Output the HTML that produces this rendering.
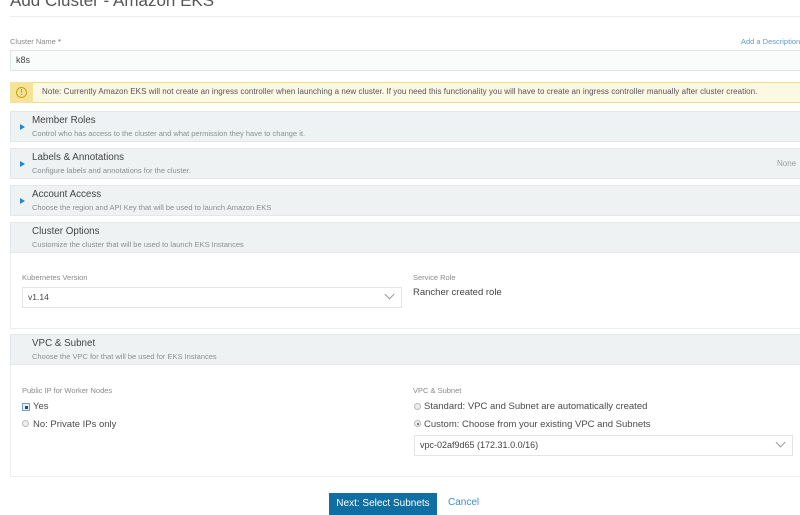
<!DOCTYPE html>
<html><head><meta charset="utf-8"><style>
*{box-sizing:border-box;margin:0;padding:0}
body{width:800px;height:513px;overflow:hidden;background:#fff;font-family:"Liberation Sans",sans-serif;color:#4a4a4a;position:relative}
.a{position:absolute;white-space:nowrap}
.lbl{font-size:7.5px;color:#8a8a8a}
.panel{position:absolute;left:10px;width:800px;background:#eff2f3;border:1px solid #e4e7e9}
.body{position:absolute;left:10px;width:800px;background:#fff;border:1px solid #eceeef}
.ph{position:absolute;left:21px;font-size:9.8px;color:#444}
.ps{position:absolute;left:21px;font-size:7.5px;color:#8d8d8d}
.tri{position:absolute;left:9px;width:0;height:0;border-left:5px solid #1e88d8;border-top:3.5px solid transparent;border-bottom:3.5px solid transparent}
.inp{position:absolute;background:#fff;border:1px solid #e2e5e7;font-size:9px;color:#444;padding-left:5px}
.rad{position:absolute;width:7px;height:7px;border-radius:50%;border:1px solid #b8b8b8;background:#eee}
</style></head><body>
<div class="a" style="left:10px;top:-9px;font-size:17px;color:#555">Add Cluster - Amazon EKS</div>
<div class="a" style="left:10px;top:16px;width:790px;height:1px;background:#ebedee"></div>
<div class="a lbl" style="left:10px;top:37px">Cluster Name <span style="color:#d33">*</span></div>
<div class="a" style="left:741px;top:37px;font-size:7.5px;color:#5b9bd5">Add a Description</div>
<div class="inp" style="left:10px;top:50px;width:800px;height:21px;background:#fafbfb;line-height:19px">k8s</div>
<div class="a" style="left:10px;top:82px;width:800px;height:21px;background:#fdf8e3;border:1px solid #f2dc78"></div>
<div class="a" style="left:10px;top:82px;width:23px;height:21px;background:#f6e39a"></div>
<div class="a" style="left:16px;top:87px;width:11px;height:11px;border:1.3px solid #c9a10b;border-radius:50%;font-size:8px;line-height:9px;text-align:center;color:#c9a10b;font-weight:bold">!</div>
<div class="a" style="left:42px;top:87px;font-size:8px;letter-spacing:0.05px;color:#555">Note: Currently Amazon EKS will not create an ingress controller when launching a new cluster. If you need this functionality you will have to create an ingress controller manually after cluster creation.</div>

<div class="panel" style="top:111px;height:31px"><div class="tri" style="top:12px"></div><div class="ph" style="top:3px">Member Roles</div><div class="ps" style="top:17px">Control who has access to the cluster and what permission they have to change it.</div></div>
<div class="panel" style="top:148px;height:31px"><div class="tri" style="top:12px"></div><div class="ph" style="top:3px">Labels &amp; Annotations</div><div class="ps" style="top:17px">Configure labels and annotations for the cluster.</div><div class="a" style="left:766px;top:10px;font-size:8px;color:#999">None</div></div>
<div class="panel" style="top:185px;height:31px"><div class="tri" style="top:12px"></div><div class="ph" style="top:3px">Account Access</div><div class="ps" style="top:17px">Choose the region and API Key that will be used to launch Amazon EKS</div></div>

<div class="body" style="top:222px;height:107px"></div>
<div class="panel" style="top:222px;height:31px"><div class="ph" style="top:3px">Cluster Options</div><div class="ps" style="top:17px">Customize the cluster that will be used to launch EKS Instances</div></div>
<div class="a lbl" style="left:22px;top:273px">Kubernetes Version</div>
<div class="inp" style="left:22px;top:287px;width:380px;height:21px;line-height:19px;font-size:8.5px">v1.14<span style="position:absolute;right:8px;top:3px;width:7px;height:7px;border-right:1px solid #999;border-bottom:1px solid #999;transform:rotate(45deg)"></span></div>
<div class="a lbl" style="left:413px;top:273px">Service Role</div>
<div class="a" style="left:413px;top:287px;font-size:9.5px;color:#444">Rancher created role</div>

<div class="body" style="top:334px;height:143px"></div>
<div class="panel" style="top:334px;height:31px"><div class="ph" style="top:3px">VPC &amp; Subnet</div><div class="ps" style="top:17px">Choose the VPC for that will be used for EKS Instances</div></div>
<div class="a lbl" style="left:22px;top:386px">Public IP for Worker Nodes</div>
<div class="a" style="left:22px;top:403px;width:8px;height:8px;border:1px solid #6a9ee0;background:#e8effa"><div style="margin:1.5px;width:3px;height:3px;background:#444"></div></div>
<div class="a" style="left:33px;top:401px;font-size:9.5px">Yes</div>
<div class="rad" style="left:22px;top:420px"></div>
<div class="a" style="left:33px;top:419px;font-size:9.5px">No: Private IPs only</div>
<div class="a lbl" style="left:413px;top:386px">VPC &amp; Subnet</div>
<div class="rad" style="left:414px;top:403px"></div>
<div class="a" style="left:424px;top:401px;font-size:9.5px">Standard: VPC and Subnet are automatically created</div>
<div class="rad" style="left:414px;top:420px"><div style="margin:1.5px;width:2.5px;height:2.5px;border-radius:50%;background:#555"></div></div>
<div class="a" style="left:424px;top:419px;font-size:9.5px">Custom: Choose from your existing VPC and Subnets</div>
<div class="inp" style="left:414px;top:435px;width:379px;height:21px;line-height:19px;font-size:9px">vpc-02af9d65 (172.31.0.0/16)<span style="position:absolute;right:8px;top:3px;width:7px;height:7px;border-right:1px solid #999;border-bottom:1px solid #999;transform:rotate(45deg)"></span></div>

<div class="a" style="left:329px;top:493px;width:108px;height:22px;background:#0f6fa3;color:#fff;font-size:10px;text-align:center;line-height:21px">Next: Select Subnets</div>
<div class="a" style="left:448px;top:497px;font-size:10px;color:#3b8ed6">Cancel</div>
</body></html>
